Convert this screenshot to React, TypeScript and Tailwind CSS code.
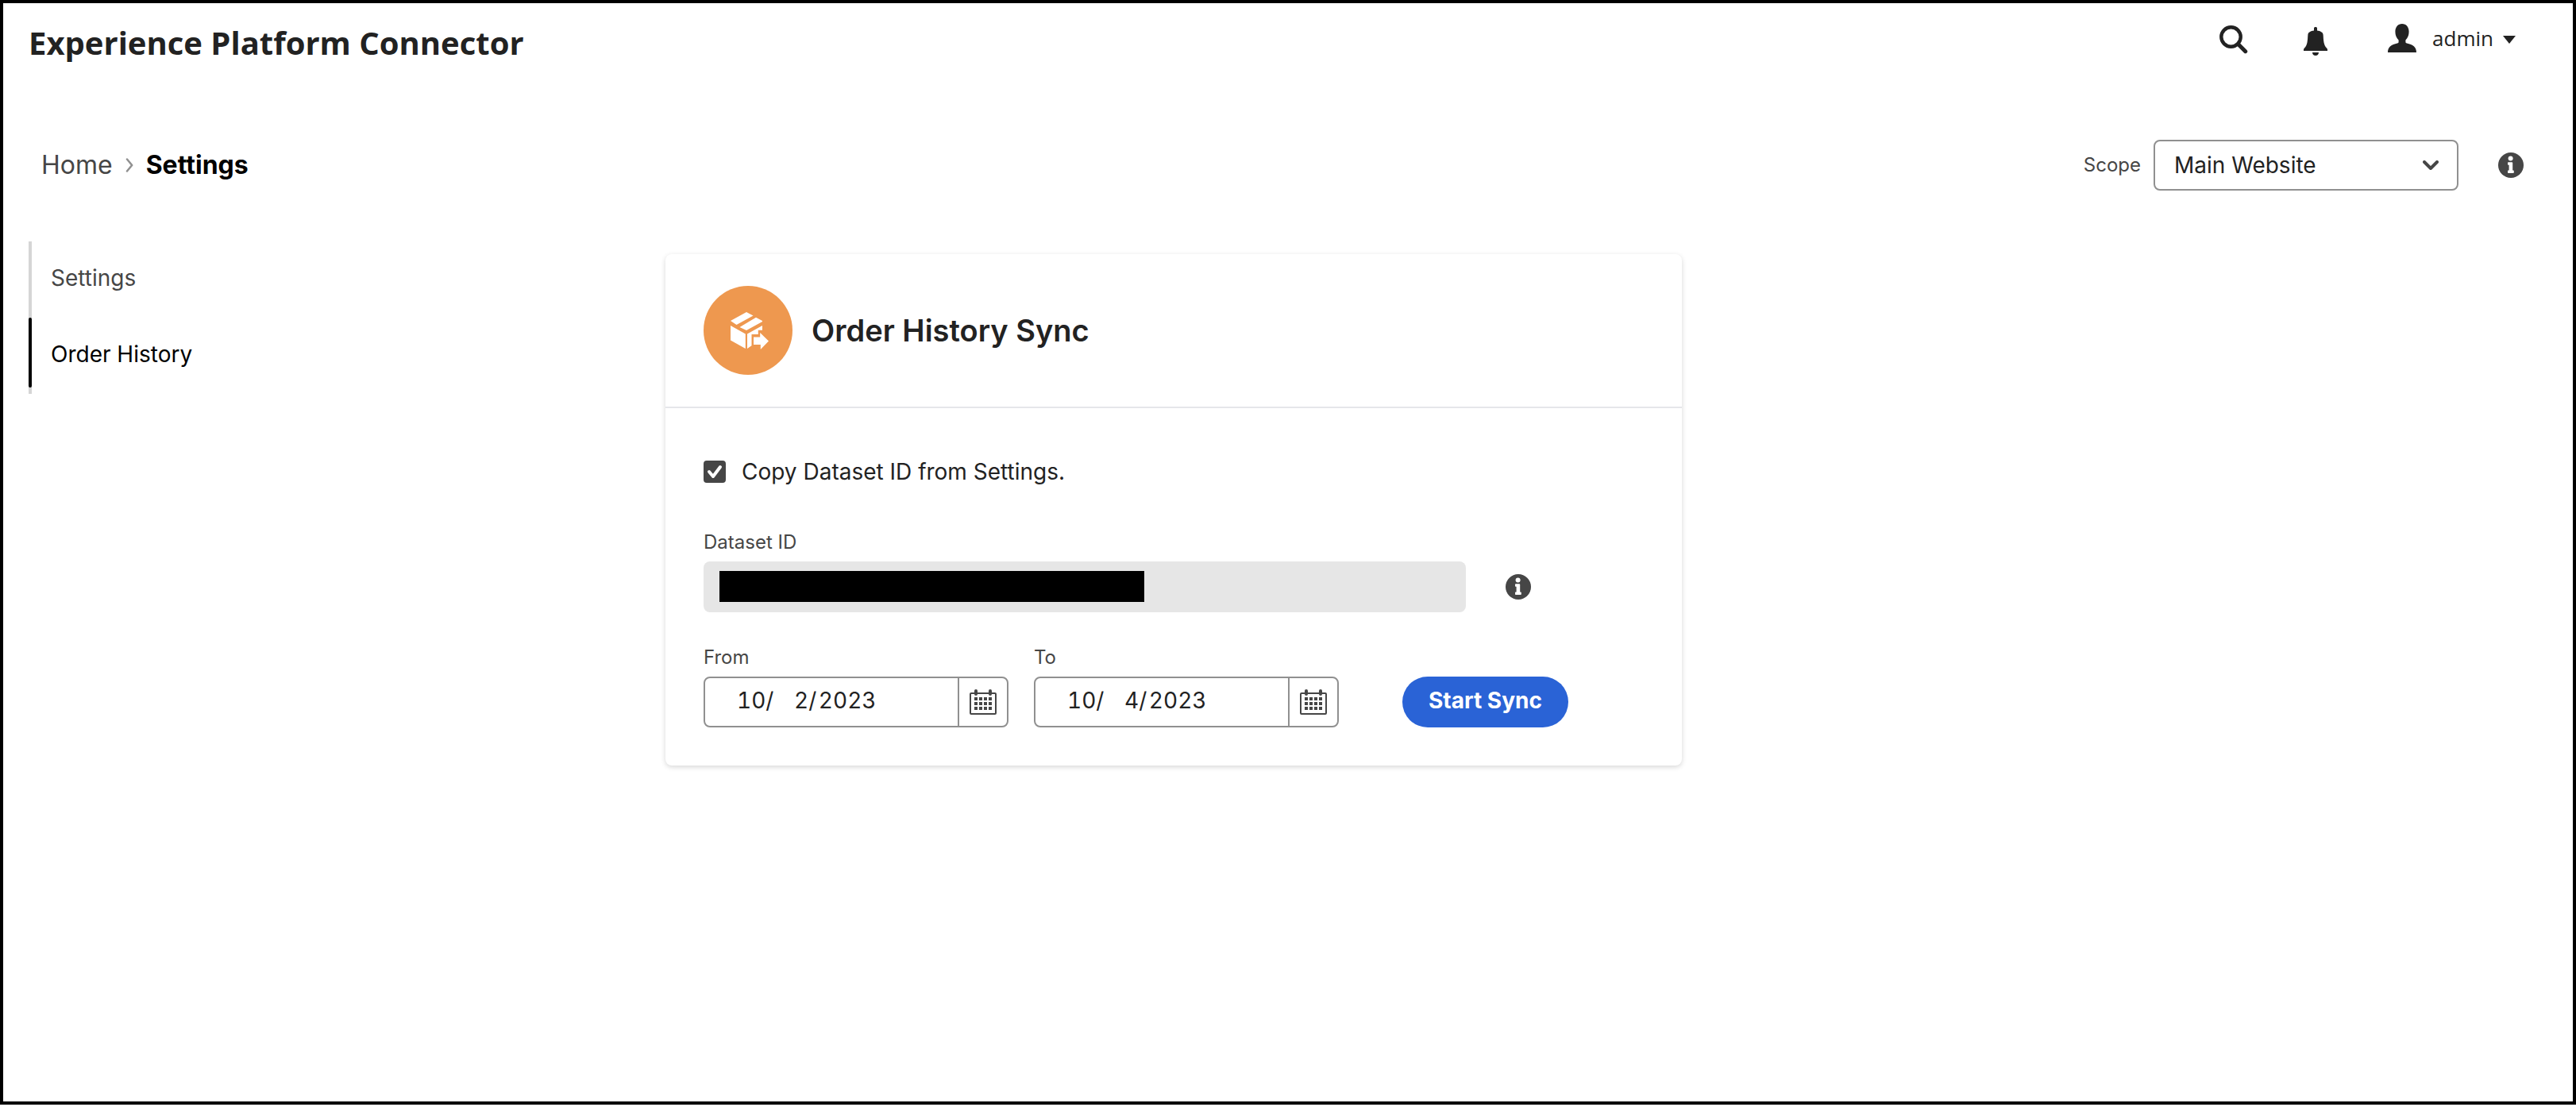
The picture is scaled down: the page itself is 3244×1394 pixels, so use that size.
import React, { useState } from "react";

function InfoIcon() {
  return (
    <svg viewBox="0 0 32 32" className="size-8 shrink-0" aria-hidden="true">
      <circle cx="16" cy="16" r="16" fill="#464646" />
      <circle cx="15.6" cy="7.6" r="3" fill="#fff" />
      <path
        d="M12.8 12.2h4.6a.8.8 0 0 1 .8.8v9.4h.8a.8.8 0 0 1 .8.8v2a.8.8 0 0 1-.8.8h-6.200a.8.8 0 0 1-.8-.8v-2a.8.8 0 0 1 .8-.8h.8v-6.600h-.8a.8.8 0 0 1-.8-.8v-2a.8.8 0 0 1 .8-.8z"
        fill="#fff"
      />
    </svg>
  );
}

function SearchIcon() {
  return (
    <svg viewBox="0 0 36 36" className="size-9" fill="none" stroke="#222" aria-hidden="true">
      <circle cx="14.500" cy="14.500" r="12.200" strokeWidth="4.400" />
      <path d="M23.500 23.500l9.200 9.200" strokeWidth="5" strokeLinecap="round" />
    </svg>
  );
}

function BellIcon() {
  return (
    <svg viewBox="0 0 30 36" className="h-9 w-[30px]" fill="#222" aria-hidden="true">
      <path d="M13 1.500a1.500 1.500 0 0 1 1.500-1.500h1a1.500 1.500 0 0 1 1.500 1.500V4.600c4 .6 7.200 2 7.600 5.200.3 3 .2 6.200.9 9.600.7 3.400 1.900 5.400 3.500 7 .7.700 1 1.200 1 2V30H0v-1.600c0-.8.300-1.300 1-2 1.600-1.600 2.800-3.600 3.500-7 .7-3.400.6-6.600.9-9.600.4-3.200 3.600-4.600 7.600-5.200z" />
      <path d="M11 32h8c0 2.400-1.700 4-4 4s-4-1.600-4-4z" />
    </svg>
  );
}

function UserIcon() {
  return (
    <svg viewBox="0 0 36 36" className="size-9" fill="#222" aria-hidden="true">
      <path d="M18 0c5.200 0 8.600 4 8.600 10 0 4-1.400 7.600-4.200 10.400v2.400c0 1 .6 1.500 1.600 1.800 7.500 1.600 12 4.800 12 11.400H0c0-6.600 4.500-9.800 12-11.400 1-.3 1.600-.8 1.600-1.800v-2.400C10.800 17.600 9.400 14 9.400 10c0-6 3.400-10 8.600-10z" />
    </svg>
  );
}

function PackageIcon() {
  return (
    <svg viewBox="-4 0 52 47" className="h-[47px] w-[52px]" fill="#fff" aria-hidden="true">
      <path d="M0 11L20 0l8.500 4.400L7.500 16z" />
      <path d="M11.500 19L32 6.700l8 4.300v1L20 23z" />
      <path d="M0 17l18.800 10.500V46L0 35.400z" />
      <path d="M21 27.500L40 17v5.700h-5.200V28H26.500v14.200L21 46z" />
      <path d="M29 31.500h8.200V26L48 36.400 37.800 47v-6H29z" />
    </svg>
  );
}

function CalendarIcon() {
  const cols = [6, 12, 18, 24];
  const rows = [10, 16, 22];
  return (
    <svg viewBox="0 0 34 32" className="h-8 w-[34px]" aria-hidden="true">
      <rect x="1" y="5" width="32" height="26" rx="1" fill="none" stroke="#464646" strokeWidth="2" />
      <rect x="6" y="0" width="4" height="8" rx="2" fill="#464646" />
      <rect x="24" y="0" width="4" height="8" rx="2" fill="#464646" />
      {rows.map((y) =>
        cols.map((x) => <rect key={`${x}-${y}`} x={x} y={y} width="4" height="4" fill="#464646" />),
      )}
    </svg>
  );
}

function DateField({ id, label, initial }: { id: string; label: string; initial: string }) {
  const [value, setValue] = useState(initial);
  return (
    <div className="flex w-96 flex-col">
      <label htmlFor={id} className="flex h-12 items-center text-[24px] text-[#464646]">
        {label}
      </label>
      <div className="flex h-16 overflow-hidden rounded-lg border-2 border-[#909090]">
        <input
          id={id}
          value={value}
          onChange={(e) => setValue(e.target.value)}
          className="min-w-0 flex-1 pb-1 pl-10 text-[28px] whitespace-pre text-[#222] tabular-nums outline-none"
        />
        <button
          type="button"
          aria-label={`Open ${label} calendar`}
          className="flex w-[62px] items-center justify-center border-l-2 border-[#909090]"
        >
          <CalendarIcon />
        </button>
      </div>
    </div>
  );
}

export default function App() {
  const [copy, setCopy] = useState(true);
  return (
    <div className="flex min-h-screen flex-col bg-white pb-[3px] font-['Inter',sans-serif] text-[#222]">
      <div className="flex-1 border-4 border-black">
        <header className="flex h-[100px] items-center justify-between pr-[72px] pl-8">
          <h1 className="font-['Open_Sans',sans-serif] text-[40px] font-bold">
            Experience Platform Connector
          </h1>
          <div className="mb-2 flex items-center">
            <button type="button" aria-label="Search">
              <SearchIcon />
            </button>
            <button type="button" aria-label="Notifications" className="ml-[70px] pt-1">
              <BellIcon />
            </button>
            <button
              type="button"
              className="ml-[76px] flex items-center pb-1 font-['Open_Sans',sans-serif] text-[26px]"
            >
              <UserIcon />
              <span className="ml-5">admin</span>
              <svg viewBox="0 0 16 10" className="mt-1 ml-3 h-[10px] w-4" fill="#222" aria-hidden="true">
                <path d="M0 0h16L8 10z" />
              </svg>
            </button>
          </div>
        </header>

        <div className="mt-[72px] flex h-16 items-center justify-between pr-[62px] pl-12">
          <nav aria-label="Breadcrumb" className="flex items-center text-[32px]">
            <a href="#home" className="text-[#464646]">
              Home
            </a>
            <svg viewBox="0 0 10 18" className="mx-4 h-[18px] w-[10px]" fill="none" stroke="#909090" strokeWidth="2.500" strokeLinecap="round" strokeLinejoin="round" aria-hidden="true">
              <path d="M2 1.500L8.200 9 2 16.500" />
            </svg>
            <span className="font-bold text-black" aria-current="page">
              Settings
            </span>
          </nav>
          <div className="flex items-center">
            <label htmlFor="scope" className="mr-4 text-[24px] text-[#464646]">
              Scope
            </label>
            <div className="relative">
              <select
                id="scope"
                className="h-16 w-96 appearance-none rounded-lg border-2 border-[#909090] bg-white pl-6 text-[28px] text-[#222]"
              >
                <option>Main Website</option>
              </select>
              <svg viewBox="0 0 20 12" className="pointer-events-none absolute top-[26px] right-[25px] h-3 w-5" fill="none" stroke="#464646" strokeWidth="4" strokeLinecap="round" strokeLinejoin="round" aria-hidden="true">
                <path d="M2 2l8 8 8-8" />
              </svg>
            </div>
            <button type="button" aria-label="Scope information" className="ml-[50px]">
              <InfoIcon />
            </button>
          </div>
        </div>

        <div className="grid grid-cols-[minmax(0,834px)_1280px_1fr] items-start">
          <nav aria-label="Sections" className="mt-16 ml-8 flex h-48 w-80 text-[28px]">
            <div className="w-1 bg-[#d5d5d5] pt-24">
              <div className="h-[88px] rounded-sm bg-black" />
            </div>
            <div className="ml-6 flex flex-col">
              <a href="#settings" className="flex h-24 items-center pb-1 text-[#464646]">
                Settings
              </a>
              <a href="#orders" className="flex h-24 items-center pb-1 text-black" aria-current="page">
                Order History
              </a>
            </div>
          </nav>

          <main className="mt-20 rounded-lg bg-white shadow-[0_2px_6px_rgba(0,0,0,0.16)]">
            <div className="flex items-center border-b-2 border-[#e5e6ea] px-12 py-10">
              <div className="flex size-28 items-center justify-center rounded-full bg-[#ee984f]">
                <PackageIcon />
              </div>
              <h2 className="ml-6 text-[38px] font-semibold">Order History Sync</h2>
            </div>
            <form className="px-12 pt-[66px] pb-12" onSubmit={(e) => e.preventDefault()}>
              <label className="flex h-7 w-fit items-center text-[28px]">
                <span className="relative flex size-7">
                  <input
                    type="checkbox"
                    checked={copy}
                    onChange={(e) => setCopy(e.target.checked)}
                    className="peer size-7 appearance-none rounded border-4 border-[#464646] checked:bg-[#464646]"
                  />
                  <svg viewBox="0 0 28 28" className="pointer-events-none invisible absolute inset-0 size-7 peer-checked:visible" fill="none" stroke="#fff" strokeWidth="4" strokeLinecap="round" strokeLinejoin="round" aria-hidden="true">
                    <path d="M7 14l5 6 9-12" />
                  </svg>
                </span>
                <span className="ml-5">Copy Dataset ID from Settings.</span>
              </label>

              <label htmlFor="dataset" className="mt-[51px] flex h-12 items-center text-[24px] text-[#464646]">
                Dataset ID
              </label>
              <div className="flex items-center">
                <div className="relative">
                  <input id="dataset" readOnly className="block h-16 w-[960px] rounded-lg bg-[#e6e6e6] px-5 outline-none" />
                  <div className="absolute top-3 left-5 h-[39px] w-[535px] bg-black" />
                </div>
                <button type="button" aria-label="Dataset information" className="ml-[50px]">
                  <InfoIcon />
                </button>
              </div>

              <div className="mt-[33px] flex items-end">
                <DateField id="from" label="From" initial={"10/ \u20072/\u200A2023"} />
                <div className="ml-8">
                  <DateField id="to" label="To" initial={"10/ \u20074/\u200A2023"} />
                </div>
                <button
                  type="submit"
                  className="ml-20 flex h-16 w-[209px] items-center justify-center rounded-full bg-[#2a63d6] pb-1 text-[28px] font-bold text-white"
                >
                  Start Sync
                </button>
              </div>
            </form>
          </main>
        </div>
      </div>
    </div>
  );
}
